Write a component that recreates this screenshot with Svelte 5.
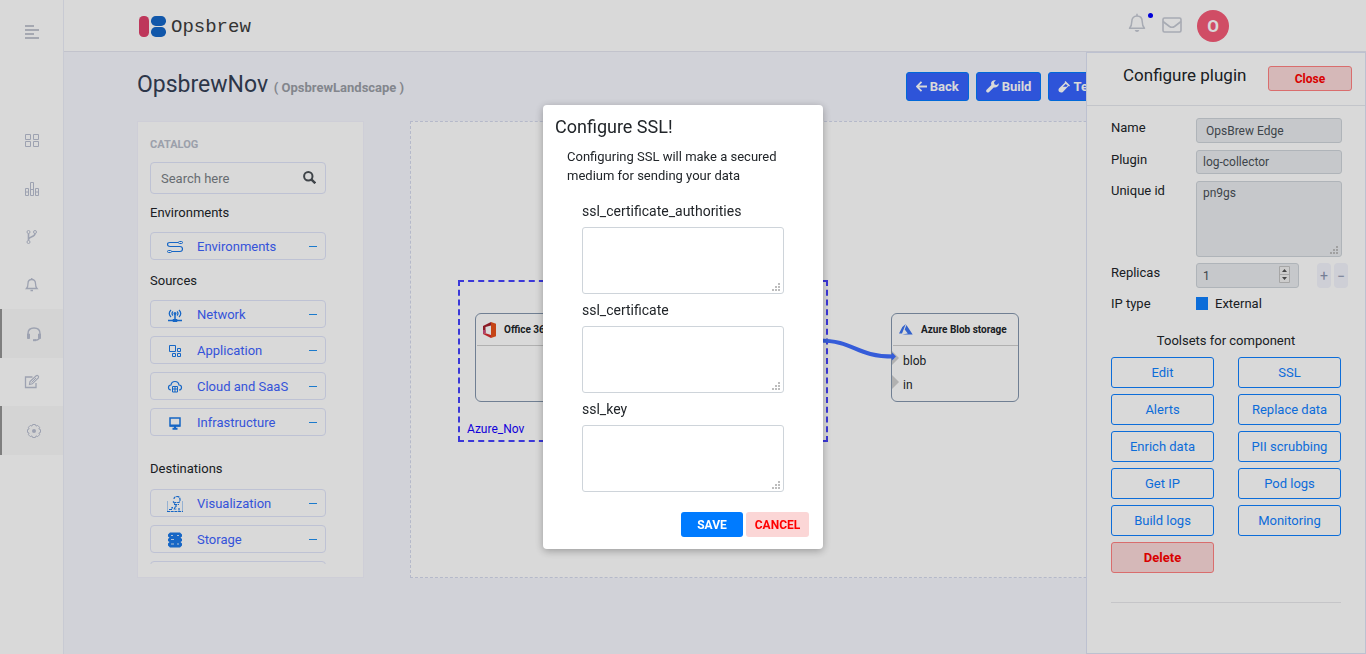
<script>
  const nav = [
    { id: 'grid', label: 'Dashboard', active: false },
    { id: 'chart', label: 'Statistics', active: false },
    { id: 'branch', label: 'Pipelines', active: false },
    { id: 'bell', label: 'Alerts', active: false },
    { id: 'headset', label: 'Support', active: true },
    { id: 'edit', label: 'Notes', active: false },
    { id: 'gear', label: 'Settings', active: true }
  ];

  const catalog = [
    { title: 'Environments', items: ['Environments'] },
    { title: 'Sources', items: ['Network', 'Application', 'Cloud and SaaS', 'Infrastructure'] },
    { title: 'Destinations', items: ['Visualization', 'Storage', ''] }
  ];

  const tools = ['Edit', 'SSL', 'Alerts', 'Replace data', 'Enrich data', 'PII scrubbing', 'Get IP', 'Pod logs', 'Build logs', 'Monitoring'];
  const sslFields = ['ssl_certificate_authorities', 'ssl_certificate', 'ssl_key'];

  let values = $state({ ssl_certificate_authorities: '', ssl_certificate: '', ssl_key: '' });
  let replicas = $state(1);
</script>

{#snippet grip()}
  <svg class="grip" viewBox="0 0 8 8" width="8" height="8" aria-hidden="true">
    <path d="M6 0h2v2H6zM3 3h2v2H3zM6 3h2v2H6zM0 6h2v2H0zM3 6h2v2H3zM6 6h2v2H6z" />
  </svg>
{/snippet}

{#snippet navIcon(id)}
  <svg width="16" height="16" viewBox="0 0 16 16" fill="none" stroke="currentColor" aria-hidden="true">
    {#if id === 'grid'}
      <path d="M1.500 1.500h5v5h-5zM9.500 1.500h5v5h-5zM1.500 8.500h5v5h-5zM9.500 8.500h5v5h-5z" />
    {:else if id === 'chart'}
      <path d="M1.500 7.500h3v7h-3zM6.500 1.500h3v13h-3zM11.500 7.500h3v7h-3zM1.500 11h3M6.500 8.500h3M11.500 11h3" />
    {:else if id === 'branch'}
      <circle cx="4.500" cy="3" r="1.500" /><circle cx="11" cy="3" r="1.500" /><circle cx="4.500" cy="13" r="1.500" />
      <path d="M4.500 4.500v7M11 4.500c0 4-6 2.500-6.500 6" stroke-width="1.600" />
    {:else if id === 'bell'}
      <path d="M2.500 11.500h10.500c-1.500-1.500-1.500-2.500-1.500-5 0-2.500-1.500-4-3.750-4S4 4 4 6.500c0 2.500 0 3.500-1.500 5z" stroke-width="1.300" />
      <path d="M7.750 1v1.500M6.500 13.500h2.500" stroke-width="1.300" />
    {:else if id === 'headset'}
      <path d="M2 9V7.500C2 4 4.500 2 8 2s6 2 6 5.500V10c0 3-2 4.300-5.500 4.300" stroke-width="1.400" />
      <path d="M1.500 8h2v4.500h-2zM12.500 8h2v4.500h-2z" fill="currentColor" />
      <path d="M7 14.200h3" stroke-width="2" />
    {:else if id === 'edit'}
      <path d="M8.500 3H1.500v10.500h10.500V9" stroke-width="1.300" />
      <path d="M5.500 10.500l.5-3L12.200 1.700q1-.6 1.900.2t.2 1.900L8.300 9.800z" stroke-width="1.200" />
      <path d="M7.500 8.500l4.500-4.500" />
    {:else}
      <path d="M6.600 1.500h2.800l.6 1.600 1.700-.7 1.900 1.900-.7 1.700 1.600.6v2.800l-1.600.6.7 1.700-1.900 1.900-1.700-.7-.6 1.600H6.600L6 12.900l-1.700.7-1.900-1.900.7-1.700-1.600-.6V6.600L3.100 6l-.7-1.700 1.900-1.900 1.700.7z" />
      <circle cx="8" cy="8" r="2" fill="currentColor" stroke="none" />
    {/if}
  </svg>
{/snippet}

{#snippet itemIcon(name)}
  <svg width="16" height="16" viewBox="0 0 16 16" fill="none" stroke="currentColor" aria-hidden="true">
    {#if name === 'Environments'}
      <path d="M11 3.500H3Q.5 3.500.5 5.500T3 7.500H13q2.500 0 2.500 2.500T13 12.500H5" stroke-width="1.200" />
      <rect x="11.500" y="2.500" width="4" height="2" rx="1" /><rect x=".5" y="11.500" width="4" height="2" rx="1" />
    {:else if name === 'Network'}
      <path d="M4 3Q.5 6.500 4 10M12 3q3.500 3.500 0 7M6 4.500q-2 2 0 4M10 4.500q2 2 0 4" stroke-width="1.200" />
      <circle cx="8" cy="6.500" r="1" fill="currentColor" />
      <path d="M8 7v5M1 13.500h14M5.500 13.500h5" stroke-width="1.500" /><path d="M6 12.500h4v2H6z" fill="currentColor" />
    {:else if name === 'Application'}
      <path d="M2.500 2.500h6v6h-6zM10.500 5.500h3v3h-3zM5.500 10.500h3v3h-3zM10.500 10.500h3v3h-3z" />
    {:else if name === 'Cloud and SaaS'}
      <path d="M4 11Q1.500 11 1.500 8.500T4 6q.5-3.500 4-3.500T12 6q2.500 0 2.500 2.500T12 11" stroke-width="1.200" />
      <path d="M5.500 7.500h5v5.500h-5zM5.500 10h5M8 7.500V13" />
    {:else if name === 'Infrastructure'}
      <path d="M3 3h10v8H3z" stroke-width="1.500" /><path d="M3 10.500h10M8 11v2M5.500 13.700h5" stroke-width="2" />
    {:else if name === 'Visualization'}
      <path d="M.5 5v10.500M15.500 5v10.500" stroke-opacity=".35" />
      <path d="M0 15.500h16M2 13.500h3v-2h1M7 13.500l1-2 1 2M12 14.500V12M7 3q0-2.500 3-2.500t3 3-1.500 3H8M6 5.500l2 2M7 8.500h5M9 9v2" stroke-width="1.200" stroke-dasharray="3 .7" />
    {:else if name === 'Storage'}
      <path d="M3 .5h10l2 2v2l-1.500 1L15 7v2l-1.500 1L15 11.500v2l-2 2H3l-2-2v-2L2.500 10 1 9V7l1.500-1.500L1 4.500v-2z" fill="currentColor" stroke="none" />
      <path d="M4 3.500h2M10 3.500h2M4 7.500h3M4 12h3M10 12h2" stroke="#fff" stroke-width=".8" />
    {/if}
  </svg>
{/snippet}

<div class="app">
  <aside class="rail">
    <button class="menu" aria-label="Toggle menu">
      <svg width="14" height="14" viewBox="0 0 14 14" aria-hidden="true"><path d="M0 0h9v2H0zM0 4h14v2H0zM0 8h9v2H0zM0 12h14v2H0z" fill="currentColor" /></svg>
    </button>
    <nav>
      {#each nav as n}
        <a href="#{n.id}" class:active={n.active} aria-label={n.label}>{@render navIcon(n.id)}</a>
      {/each}
    </nav>
  </aside>

  <div class="page">
    <header class="top">
      <a class="logo" href="#home">
        <svg width="27" height="22" viewBox="0 0 27 22" aria-hidden="true">
          <rect x="0" y="0" width="10" height="21" rx="4.500" fill="#e0416b" />
          <rect x="12" y="0" width="15" height="10" rx="4.800" fill="#1467c8" />
          <rect x="12" y="11" width="15" height="10" rx="4.800" fill="#1467c8" />
        </svg>
        <span>Opsbrew</span>
      </a>
      <div class="account">
        <button class="bell" aria-label="Notifications">
          <svg width="18" height="20" viewBox="0 0 18 20" fill="none" stroke="currentColor" stroke-width="1.500" aria-hidden="true">
            <path d="M1.500 15.200h15c-2-2-2.300-3.200-2.300-6.700 0-3.500-2-5.500-5.200-5.500S3.800 5 3.800 8.500c0 3.500-.3 4.700-2.300 6.700z" stroke-linejoin="round" />
            <path d="M9 .8V3" /><path d="M6.700 17h4.600q-.5 2-2.300 2t-2.300-2z" fill="currentColor" stroke="none" />
          </svg>
          <i></i>
        </button>
        <button class="mail" aria-label="Messages">
          <svg width="20" height="16" viewBox="0 0 20 16" fill="none" stroke="currentColor" stroke-width="1.600" aria-hidden="true">
            <rect x="1" y="1" width="18" height="14" rx="1.500" /><path d="M1 4.500l6.500 5q2.500 1.600 5 0l6.500-5" />
          </svg>
        </button>
        <button class="avatar">O</button>
      </div>
    </header>

    <main>
      <div class="heading">
        <h1>OpsbrewNov <small>( OpsbrewLandscape )</small></h1>
        <div class="actions">
          <button>
            <svg width="11" height="11" viewBox="0 0 11 11" fill="none" stroke="currentColor" stroke-width="1.800" aria-hidden="true"><path d="M5.500 .8L1 5.500l4.500 4.700M1 5.500h10" /></svg>Back</button>
          <button>
            <svg width="13" height="13" viewBox="0 0 13 13" aria-hidden="true"><path d="M12.700 3.200L10.800 5 8.500 4.500 8 2.300 9.900.3Q7.500-.3 6 1.300T5.400 5L.6 9.800q-.9 1.100 0 2.200 1.100 1 2.300.2L7.700 7.400q2.200.6 3.800-.8t1.200-3.400z" fill="currentColor" /></svg>Build</button>
          <button>
            <svg width="12" height="12" viewBox="0 0 12 12" aria-hidden="true"><path d="M7.500 0L12 4.500l-.9.900-.6-.4-5.600 5.900q-1.800 1.300-3.700-.2-1.400-1.700-.1-3.500L7 1.500 6.600.9zM7.700 2.900L4.800 5.700h3.800L9.700 4.600z" fill="currentColor" fill-rule="evenodd" /></svg>Test</button>
        </div>
      </div>

      <div class="work">
        <section class="catalog">
          <h2>CATALOG</h2>
          <div class="search">
            <input type="text" placeholder="Search here" aria-label="Search here" />
            <svg width="13" height="13" viewBox="0 0 13 13" fill="none" stroke="currentColor" aria-hidden="true"><circle cx="5.300" cy="5.300" r="4.200" stroke-width="2" /><path d="M8.300 8.300l4 4" stroke-width="2.400" /></svg>
          </div>
          <div class="list">
            {#each catalog as group}
              <h3>{group.title}</h3>
              <ul>
                {#each group.items as item}
                  <li><button aria-label={item || 'More'}><span class="ico">{@render itemIcon(item)}</span><span class="name">{item}</span><span class="dash"></span></button></li>
                {/each}
              </ul>
            {/each}
          </div>
        </section>

        <section class="canvas">
          <div class="group"><span>Azure_Nov</span></div>
          <div class="node office">
            <header>
              <svg width="13" height="16" viewBox="0 0 13 16" aria-hidden="true"><path d="M8 0L0 4v8l2.500-1V5L8 3.500z" fill="#a4202c" /><path d="M8 0l5 1.800v12.400L8 16z" fill="#e8501a" /><path d="M0 12l8 4v-3l-5.500-1.800z" fill="#d82b30" /><path d="M0 8v4l2.500-1V8z" fill="#cf4a7b" /></svg>
              Office 365
            </header>
          </div>
          <div class="node blob">
            <header>
              <svg width="14" height="11" viewBox="0 0 14 11" fill="#3d74f0" aria-hidden="true"><path d="M6.800 0L3.300 3 0 9.600h3zM7.400.9L5.700 5.500 8.800 9.400 3.200 10.600H13.700z" /></svg>
              Azure Blob storage
            </header>
            <p>blob</p>
            <p>in</p>
          </div>
          <svg class="wire" width="80" height="24" viewBox="0 0 80 24" fill="none" aria-hidden="true">
            <path d="M0 3.500C38 3.500 36 19.500 76 19.500" stroke="#3f6dff" stroke-width="4" />
            <path d="M74 15.500l4 4-4 4z" fill="#3f6dff" />
          </svg>
        </section>
      </div>
    </main>
  </div>

  <aside class="drawer">
    <header><h2>Configure plugin</h2><button class="danger">Close</button></header>
    <div class="body">
      <div class="form">
        <label for="name">Name</label><input id="name" class="wide" type="text" value="OpsBrew Edge" readonly />
        <label for="plugin">Plugin</label><input id="plugin" class="short" type="text" value="log-collector" readonly />
        <label for="uid">Unique id</label>
        <div class="area"><textarea id="uid" readonly value="pn9gs"></textarea>{@render grip()}</div>
        <label for="replicas">Replicas</label>
        <div class="replicas">
          <div class="number">
            <input id="replicas" type="number" bind:value={replicas} />
            <svg width="11" height="17" viewBox="0 0 11 17" aria-hidden="true"><path d="M.5.5h10v16H.5zM.5 8.500h10" fill="#f0f0f0" stroke="#c4c4c4" /><path d="M3 6h5L5.500 3zM3 11h5l-2.500 3z" fill="#505050" /></svg>
          </div>
          <button aria-label="Add replica" onclick={() => replicas++}>+</button>
          <button aria-label="Remove replica" onclick={() => replicas--}>−</button>
        </div>
        <span class="lbl">IP type</span>
        <label class="check"><input type="checkbox" checked />External</label>
      </div>
      <h3>Toolsets for component</h3>
      <div class="tools">
        {#each tools as t}<button>{t}</button>{/each}
        <button class="danger">Delete</button>
      </div>
      <hr />
    </div>
  </aside>

  <div class="backdrop">
    <div class="modal" role="dialog" aria-modal="true" aria-labelledby="ssl-title">
      <h2 id="ssl-title">Configure SSL!</h2>
      <p>Configuring SSL will make a secured medium for sending your data</p>
      <div class="fields">
        {#each sslFields as f}
          <label for={f}>{f}</label>
          <div class="area"><textarea id={f} bind:value={values[f]}></textarea>{@render grip()}</div>
        {/each}
      </div>
      <footer><button class="save">SAVE</button><button class="cancel">CANCEL</button></footer>
    </div>
  </div>
</div>

<style>
  :global(body) { margin: 0; }
  .app, .app :global(*) { box-sizing: border-box; }
  .app {
    display: flex;
    min-height: 100vh;
    overflow: hidden;
    background: #f6f7fe;
    color: #212529;
    font: 13px/20px Roboto, "Liberation Sans", sans-serif;
  }
  h1, h2, h3, p, ul { margin: 0; padding: 0; font-weight: 400; }
  li { list-style: none; }
  a { color: inherit; text-decoration: none; }
  button, input, textarea { font-family: inherit; font-size: 13px; margin: 0; }
  button { border: 0; background: none; padding: 0; cursor: pointer; color: inherit; }
  svg { display: block; flex: none; }

  .rail { width: 64px; flex: none; background: #fff; border-right: 1px solid #eceef8; color: #b9bfd0; }
  .menu { display: block; margin: 25px 0 78px 25px; color: #c2c6d0; }
  .rail nav a { display: flex; align-items: center; justify-content: center; height: 48px; }
  .rail nav a.active { height: 49px; padding-left: 2px; background: #fafafa; border-left: 2px solid #959595; }

  .page { flex: 1; min-width: 0; }
  .top { display: flex; justify-content: space-between; align-items: center; height: 52px; padding: 0 137px 0 75px; background: #fff; border-bottom: 1px solid #e4e6f0; }
  .logo { display: flex; align-items: center; gap: 5px; font: 19px/24px "Liberation Mono", monospace; color: #3d3d3d; margin-top: 3px; }
  .account { display: flex; align-items: center; gap: 15px; color: #c5c9d3; }
  .bell { position: relative; margin: 0 1px 6px 0; }
  .bell i { position: absolute; left: 20px; top: 0; width: 5px; height: 5px; border-radius: 50%; background: #0000ff; }
  .mail { margin-bottom: 2px; }
  .avatar { width: 32px; height: 32px; border-radius: 50%; background: #f55b77; color: #fff; font-size: 17px; font-weight: 700; }

  main { padding: 20px 0 0 73px; }
  .heading { display: flex; justify-content: space-between; align-items: flex-start; height: 49px; padding-right: 257px; }
  h1 { font-size: 23px; line-height: 25px; color: #344055; white-space: nowrap; }
  h1 small { font-size: 13px; font-weight: 700; color: #9a9ea6; }
  .actions { display: flex; gap: 7px; }
  .actions button { display: flex; align-items: center; justify-content: center; gap: 3px; height: 29px; padding: 0 9px; border: 1px solid #007bff; border-radius: 3px; background: #3763ff; color: #fff; font-weight: 700; }

  .work { display: flex; gap: 46px; height: calc(100vh - 197px); }
  .catalog { display: flex; flex-direction: column; width: 227px; flex: none; padding: 12px 37px 13px 12px; background: #fff; border: 1px solid #f2f3fd; }
  .catalog h2 { font-size: 11px; line-height: 22px; font-weight: 700; color: #b7bcc9; }
  .search { position: relative; margin-top: 6px; }
  .search input { width: 100%; height: 32px; padding: 0 32px 0 10px; border: 1px solid #e0e4fa; border-radius: 4px; background: #fff; outline: 0; }
  .search input::placeholder { color: #7a7f86; opacity: 1; }
  .search svg { position: absolute; right: 10px; top: 9px; color: #4a5056; }
  .list { flex: 1; min-height: 0; overflow: hidden; }
  .list h3 { font-size: 13px; line-height: 20px; padding: 11px 0 9px; }
  .list h3:first-child { padding: 9px 0; }
  .list h3:nth-of-type(3) { padding: 23px 0 10px; }
  .list ul { display: grid; gap: 8px; }
  .list button { display: flex; align-items: center; width: 100%; height: 28px; padding: 0 8px 0 16px; border: 1px solid #e0e4fa; border-radius: 4px; color: #3e63ff; }
  .ico { color: #1a78e8; padding-top: 2px; width: 30px; }
  .name { flex: 1; text-align: left; }
  .dash { width: 8px; height: 1px; background: #2090f0; }

  .canvas { position: relative; flex: 1; background: #fff; border: 1px dashed #d5daee; }
  .group { position: absolute; left: 47px; top: 158px; width: 370px; height: 162px; border: 2px dashed #4642ff; }
  .group span { position: absolute; left: 7px; bottom: 1px; color: #1500ff; font-size: 12px; }
  .node { position: absolute; top: 191px; width: 128px; height: 89px; border: 1px solid #8496ad; border-radius: 6px; font-size: 12px; }
  .node header { display: flex; align-items: center; gap: 8px; height: 32px; margin-left: 1px; padding-left: 6px; border-bottom: 1px solid #cfcfcf; font-size: 10px; font-weight: 700; white-space: nowrap; }
  .office { left: 64px; }
  .blob { left: 480px; }
  .node p { position: relative; padding: 5px 0 0 11px; line-height: 20px; height: 24px; }
  .node p::before { content: ""; position: absolute; left: 0; top: 5px; border-left: 7px solid #d0d0d0; border-top: 7px solid transparent; border-bottom: 7px solid transparent; }
  .wire { position: absolute; left: 407px; top: 215px; }

  .drawer { position: fixed; top: 52px; right: 0; bottom: 0; width: 280px; background: #fff; border: 1px solid #dfe3f5; }
  .drawer header { display: flex; align-items: center; justify-content: space-between; height: 53px; padding: 0 13px 0 36px; border-bottom: 1px solid #e6e8ee; }
  .drawer h2 { font-size: 17px; line-height: 24px; padding-bottom: 8px; }
  .danger { border: 1px solid #ff8080; border-radius: 3px; background: #fbd9d9; color: #ff0000; font-weight: 700; }
  .drawer header .danger { width: 84px; height: 25px; margin-bottom: 1px; font-size: 12px; }
  .body { padding: 12px 24px 0; }
  .form { display: grid; grid-template-columns: 85px 1fr; row-gap: 6px; }
  .form label, .lbl { line-height: 19px; }
  .form input, .form textarea { display: block; width: 100%; padding: 0 6px; border: 1px solid #ced4da; border-radius: 3px; background: #e9ecef; color: #495057; font-size: 12px; outline: 0; resize: none; }
  .form .wide { height: 25px; padding: 0 9px; margin-bottom: 1px; }
  .form .short { height: 24px; margin-bottom: 1px; }
  .form textarea { height: 76px; padding: 4px 6px; }
  .area { position: relative; }
  .grip { position: absolute; right: 4px; bottom: 3px; fill: #bdbdbd; }
  .replicas { display: flex; gap: 3px; margin-right: -6px; }
  .number { position: relative; width: 103px; margin-right: 15px; }
  .number input { height: 25px; appearance: textfield; }
  .number input::-webkit-inner-spin-button { appearance: none; }
  .number svg { position: absolute; right: 9px; top: 3px; }
  .replicas button { width: 14px; height: 25px; border-radius: 4px; background: #f3f4fc; color: #8a94b0; font-size: 14px; }
  .form .check { display: flex; align-items: center; gap: 7px; }
  .form .check input { appearance: none; width: 12px; height: 13px; border: 0; border-radius: 0; padding: 0; background: #0f80ff; }
  .body h3 { margin: 19px 0 7px; font-size: 13px; line-height: 18px; text-align: center; }
  .tools { display: grid; grid-template-columns: 1fr 1fr; gap: 6px 24px; }
  .tools button { height: 31px; border: 1px solid #0f80ff; border-radius: 3px; color: #0f80ff; white-space: nowrap; }
  .tools .danger { border-color: #ff8080; color: #ff0000; }
  hr { margin: 29px 0 0; border: 0; border-top: 1px solid #e8e8ec; }

  .backdrop { position: fixed; inset: 0; display: flex; align-items: center; justify-content: center; background: rgba(0, 0, 0, 0.15); }
  .modal { width: 280px; padding: 10px 14px 12px 12px; border-radius: 4px; background: #fff; box-shadow: 0 2px 8px rgba(0, 0, 0, 0.3); }
  .modal h2 { font-size: 18px; line-height: 24px; }
  .modal p { margin: 8px 12px 10px; line-height: 19px; }
  .fields { padding: 0 25px 0 27px; }
  .fields label { display: block; font-size: 14px; line-height: 32px; }
  .fields textarea { display: block; width: 100%; height: 67px; border: 1px solid #ced4da; border-radius: 3px; background: #fff; resize: none; outline: 0; }
  .modal footer { display: flex; justify-content: flex-end; gap: 3px; margin-top: 20px; }
  .modal footer button { height: 25px; width: 62px; border-radius: 3px; font-size: 12px; font-weight: 700; }
  .save { background: #007bff; color: #fff; }
  .modal footer .cancel { width: 63px; background: #fbd6d6; color: #ff0000; }
</style>
